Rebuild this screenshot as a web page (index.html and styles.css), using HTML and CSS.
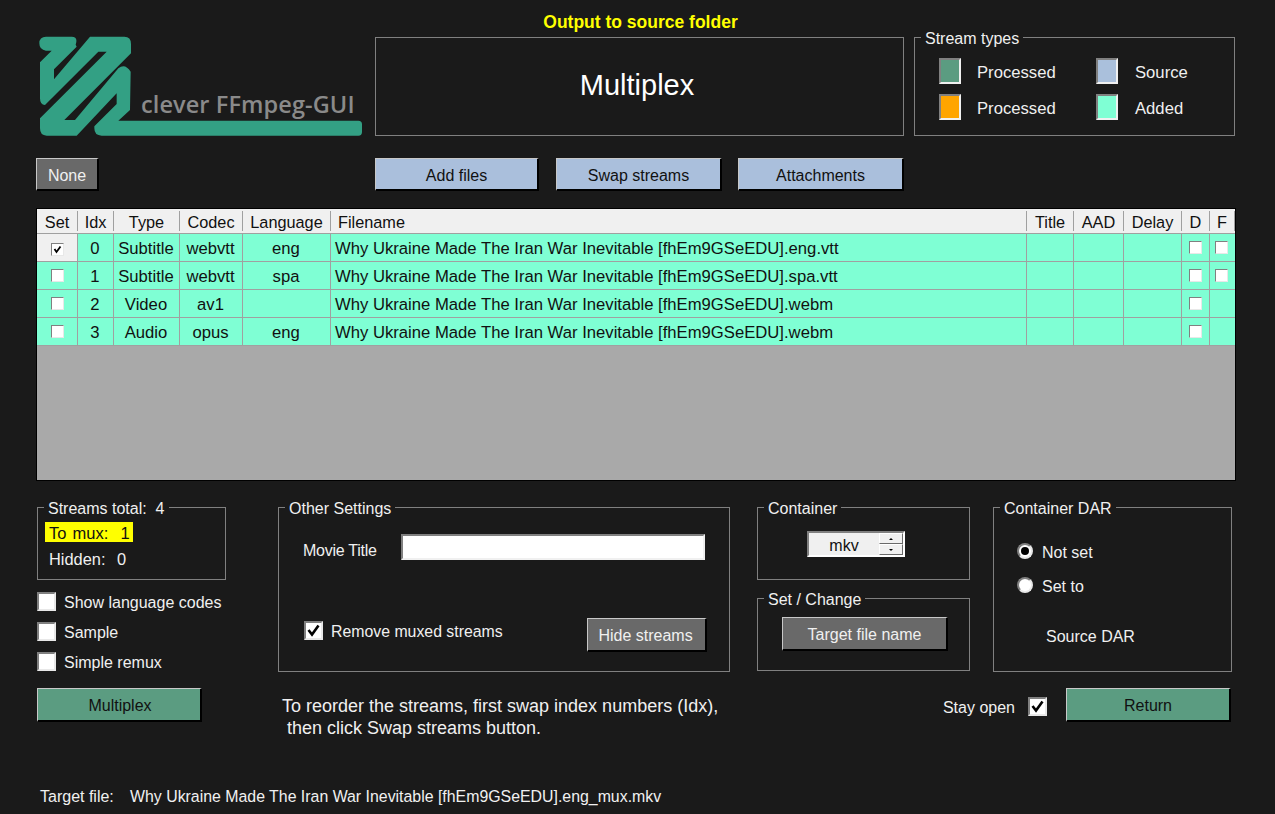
FILE: index.html
```html
<!DOCTYPE html>
<html lang="en">
<head>
<meta charset="utf-8">
<title>Multiplex</title>
<link rel="stylesheet" href="styles.css">
</head>
<body>
<div class="app">
  <header class="top">
    <div class="logo">
      <svg class="logo-mark" viewBox="0 0 990 330" width="330" height="110" aria-hidden="true">
        <path d="M33 20 L110 20 Q130 20 122 44 L125 50 L57 118 L57 148 L165 20 L268 20 Q288 20 288 42 L288 70 L88 270 L120 270 L250 115 Q270 98 287 125 L285 240 L250 272 L970 272 Q981 272 981 283 L981 306 Q981 317 970 317 L200 317 Q178 317 178 295 L178 289 L245 222 L245 190 L125 317 L35 317 Q15 317 15 295 L15 265 L215 65 L190 65 L30 225 Q15 225 15 205 L15 97 L50 62 L33 62 Q13 60 13 40 Q13 20 33 20 Z"/>
      </svg>
      <span class="logo-text">clever FFmpeg-GUI</span>
    </div>
    <div class="title-col">
      <div class="output-note">Output to source folder</div>
      <div class="title-panel">Multiplex</div>
    </div>
    <fieldset class="group types">
      <legend>Stream types</legend>
      <div class="types-grid">
        <div class="type"><span class="swatch sw-green"></span><span class="lbl">Processed</span></div>
        <div class="type"><span class="swatch sw-blue"></span><span class="lbl">Source</span></div>
        <div class="type"><span class="swatch sw-orange"></span><span class="lbl">Processed</span></div>
        <div class="type"><span class="swatch sw-aqua"></span><span class="lbl">Added</span></div>
      </div>
    </fieldset>
  </header>

  <div class="toolbar">
    <button class="btn btn-gray btn-none">None</button>
    <button class="btn btn-blue btn-add">Add files</button>
    <button class="btn btn-blue btn-swap">Swap streams</button>
    <button class="btn btn-blue btn-attach">Attachments</button>
  </div>

  <div class="grid-wrap">
    <table class="streams">
      <colgroup>
        <col class="c-set"><col class="c-idx"><col class="c-type"><col class="c-codec"><col class="c-lang"><col class="c-file"><col class="c-title"><col class="c-aad"><col class="c-delay"><col class="c-d"><col class="c-f">
      </colgroup>
      <thead>
        <tr><th>Set</th><th>Idx</th><th>Type</th><th>Codec</th><th>Language</th><th class="th-file">Filename</th><th>Title</th><th>AAD</th><th>Delay</th><th>D</th><th>F</th></tr>
      </thead>
      <tbody>
        <tr>
          <td class="current"><span class="chk-s"><svg viewBox="0 0 9 9" width="9" height="9"><path d="M1.5 4 L3.5 7 L7.5 1.5" /></svg></span></td><td>0</td><td>Subtitle</td><td>webvtt</td><td>eng</td><td class="file">Why Ukraine Made The Iran War Inevitable [fhEm9GSeEDU].eng.vtt</td><td></td><td></td><td></td><td><span class="chk-s"></span></td><td><span class="chk-s"></span></td>
        </tr>
        <tr>
          <td><span class="chk-s"></span></td><td>1</td><td>Subtitle</td><td>webvtt</td><td>spa</td><td class="file">Why Ukraine Made The Iran War Inevitable [fhEm9GSeEDU].spa.vtt</td><td></td><td></td><td></td><td><span class="chk-s"></span></td><td><span class="chk-s"></span></td>
        </tr>
        <tr>
          <td><span class="chk-s"></span></td><td>2</td><td>Video</td><td>av1</td><td></td><td class="file">Why Ukraine Made The Iran War Inevitable [fhEm9GSeEDU].webm</td><td></td><td></td><td></td><td><span class="chk-s"></span></td><td></td>
        </tr>
        <tr>
          <td><span class="chk-s"></span></td><td>3</td><td>Audio</td><td>opus</td><td>eng</td><td class="file">Why Ukraine Made The Iran War Inevitable [fhEm9GSeEDU].webm</td><td></td><td></td><td></td><td><span class="chk-s"></span></td><td></td>
        </tr>
      </tbody>
    </table>
  </div>

  <section class="bottom">
    <div class="left-col">
      <fieldset class="group totals">
        <legend class="pre">Streams total:  4</legend>
        <div class="to-mux pre">To mux:  1</div>
        <div class="hidden-count pre">Hidden:  0</div>
      </fieldset>
      <div class="checks">
        <label class="check-row"><span class="chk-l"></span><span class="lbl-s">Show language codes</span></label>
        <label class="check-row"><span class="chk-l"></span><span class="lbl-s">Sample</span></label>
        <label class="check-row"><span class="chk-l"></span><span class="lbl-s">Simple remux</span></label>
      </div>
      <button class="btn btn-green btn-mux">Multiplex</button>
    </div>

    <div class="right-col">
      <div class="panels">
        <fieldset class="group other">
          <legend>Other Settings</legend>
          <div class="title-row"><span class="movie-label">Movie Title</span><span class="field"></span></div>
          <div class="remove-row">
            <label class="check-row remove"><span class="chk-l"><svg viewBox="0 0 15 15" width="15" height="15"><path d="M2.5 7 L6 11.5 L12.5 2.5"/></svg></span><span class="lbl-s">Remove muxed streams</span></label>
            <button class="btn btn-gray btn-hide">Hide streams</button>
          </div>
        </fieldset>
        <div class="mid-col">
          <fieldset class="group container">
            <legend>Container</legend>
            <div class="spinner">
              <span class="spin-value">mkv</span>
              <span class="spin-btns"><span class="spin-up"></span><span class="spin-down"></span></span>
            </div>
          </fieldset>
          <fieldset class="group change">
            <legend>Set / Change</legend>
            <button class="btn btn-gray btn-target">Target file name</button>
          </fieldset>
        </div>
        <fieldset class="group dar">
          <legend>Container DAR</legend>
          <div class="radio-row first"><span class="radio on"></span><span class="lbl">Not set</span></div>
          <div class="radio-row"><span class="radio"></span><span class="lbl">Set to</span></div>
          <div class="source-dar">Source DAR</div>
        </fieldset>
      </div>
      <div class="actions">
        <p class="note">To reorder the streams, first swap index numbers (Idx),<br>&nbsp;then click Swap streams button.</p>
        <div class="finish">
          <span class="stay">Stay open</span>
          <span class="chk-l stay-box"><svg viewBox="0 0 15 15" width="15" height="15"><path d="M2.5 7 L6 11.5 L12.5 2.5"/></svg></span>
          <button class="btn btn-green btn-return">Return</button>
        </div>
      </div>
    </div>
  </section>

  <footer class="target"><span class="target-label">Target file:</span><span class="target-name">Why Ukraine Made The Iran War Inevitable [fhEm9GSeEDU].eng_mux.mkv</span></footer>
</div>
</body>
</html>
```
FILE: styles.css
```css
* { box-sizing: border-box; }
html, body { margin: 0; padding: 0; }
body {
  background: #1a1a1a;
  color: #f0f0f0;
  font: 16px/18px "Liberation Sans", Arial, sans-serif;
}
.app { width: 1275px; height: 814px; overflow: hidden; }
.pre { white-space: pre; }
.lbl { padding-top: 4px; }
.lbl-s { padding-top: 2px; }

/* top */
.top { display: flex; align-items: flex-start; height: 136px; padding: 14px 0 0 35px; }
.logo { position: relative; width: 340px; height: 106px; margin-top: 16px; flex: none; }
.logo-mark { display: block; fill: #33a084; }
.logo-text {
  position: absolute; left: 106px; top: 59px;
  font: 600 23.5px/30px "Open Sans", sans-serif;
  letter-spacing: 0.1px;
  color: #8a8a8a; white-space: nowrap;
}
.title-col { width: 529px; flex: none; }
.output-note { height: 23px; padding-left: 2px; text-align: center; color: #ffff00; font-weight: 700; font-size: 17.5px; line-height: 17px; }
.title-panel {
  height: 99px; padding: 0 5px 4px 0; border: 1px solid #808080;
  display: flex; align-items: center; justify-content: center;
  font-size: 29px; color: #fff;
}

.group {
  margin: 0; padding: 0; min-width: 0;
  border: 1px solid #808080;
}
.group legend { margin-left: 6px; padding: 3px 4px 0; line-height: 18px; }

.types { width: 321px; height: 109px; margin: 13px 0 0 10px; padding-top: 10px; }
.types-grid { display: grid; grid-template-columns: 157px 157px; row-gap: 10px; margin-left: 24px; font-size: 16.67px; }
.type { display: flex; align-items: center; gap: 16px; height: 26px; }
.type:nth-child(even) { gap: 17px; }
.swatch {
  width: 22px; height: 26px; flex: none;
  border: 2px solid; border-color: #808080 #f0f0f0 #f0f0f0 #808080;
}
.sw-green { background: #5b9c81; }
.sw-blue { background: #aac0dc; }
.sw-orange { background: #ffa500; }
.sw-aqua { background: #7fffd4; }

/* buttons */
.btn {
  display: block; margin: 0; padding: 2px 0 0;
  font: inherit; text-align: center;
  border-style: solid; border-width: 1px 2px 2px 1px;
  border-color: #c8c8c8 #000 #000 #c8c8c8;
}
.btn-gray { background: #696969; color: #f0f0f0; }
.btn-blue { background: #aabfdc; color: #111; }
.btn-green { background: #5b9c81; color: #111; }

.toolbar { display: flex; height: 33px; margin-top: 22px; padding-left: 36px; }
.toolbar .btn { padding-top: 4px; }
.btn-none { width: 63px; margin-right: 276px; }
.btn-add { width: 164px; margin-right: 17px; }
.btn-swap { width: 166px; margin-right: 16px; }
.btn-attach { width: 166px; }

/* table */
.grid-wrap {
  width: 1200px; height: 273px; margin: 17px 0 0 36px;
  background: #a9a9a9; border: 1px solid #000;
}
.streams { width: 1198px; table-layout: fixed; border-collapse: separate; border-spacing: 0; color: #111; }
.c-set { width: 41px; } .c-idx { width: 36px; } .c-type { width: 66px; } .c-codec { width: 63px; }
.c-lang { width: 88px; } .c-file { width: 696px; } .c-title { width: 47px; } .c-aad { width: 50px; }
.c-delay { width: 58px; } .c-d { width: 28px; } .c-f { width: 25px; }
.streams th {
  height: 25px; padding: 2px 1px 0 0; font-weight: 400; font-size: 16.3px; text-align: center;
  border-bottom: 1px solid #a0a0a0;
  background: linear-gradient(#a0a0a0, #a0a0a0) right center / 1px 20px no-repeat, #f0f0f0;
}
.streams th.th-file { text-align: left; padding-left: 7px; }
.streams td {
  height: 28px; padding: 2px 1px 0 0; text-align: center; vertical-align: middle;
  font-size: 16.67px;
  background: #7fffd4;
  border-right: 1px solid #a0a0a0; border-bottom: 1px solid #a0a0a0;
}
.streams td:first-child { padding-right: 0; }
.streams td:last-child { border-right: 0; padding-right: 2px; }
.streams td.file { text-align: left; padding-left: 4px; white-space: nowrap; }
.streams td.current { background: #f0f0f0; }
.chk-s {
  display: inline-flex; align-items: center; justify-content: center;
  width: 13px; height: 13px; vertical-align: 0;
  background: #fff; border: 1px solid; border-color: #808080 #e8e8e8 #e8e8e8 #808080;
}
.chk-s svg, .chk-l svg { fill: none; stroke: #000; display: block; }
.chk-s svg { stroke-width: 1.8; }
.chk-l svg { stroke-width: 2.6; }

/* bottom */
.bottom { display: flex; margin-top: 16px; padding-left: 37px; }
.left-col { width: 189px; flex: none; margin-right: 52px; }
.totals { height: 83px; padding-top: 4px; }
.to-mux { width: 88px; height: 20px; margin-left: 7px; line-height: 22px; padding-left: 4px; background: #ffff00; color: #111; font-size: 16.5px; word-spacing: 1.5px; }
.hidden-count { margin: 8px 0 0 7px; padding-left: 4px; line-height: 18px; font-size: 16.4px; word-spacing: 1.2px; }
.checks { display: flex; flex-direction: column; gap: 11px; margin-top: 12px; }
.check-row { display: flex; align-items: center; gap: 8px; height: 19px; }
.chk-l {
  display: flex; align-items: center; justify-content: center;
  width: 19px; height: 19px; flex: none;
  background: #fff; border: 2px solid; border-color: #808080 #e8e8e8 #e8e8e8 #808080;
}
.btn-mux { width: 165px; height: 34px; margin-top: 17px; padding-left: 2px; }

.right-col { width: 954px; flex: none; }
.panels { display: flex; height: 175px; }
.other { width: 452px; height: 175px; margin-right: 27px; padding-top: 16px; }
.title-row { display: flex; align-items: center; margin-left: 24px; }
.movie-label { width: 98px; flex: none; padding-top: 7px; white-space: nowrap; letter-spacing: -0.25px; }
.field {
  width: 304px; height: 26px; flex: none; background: #fff;
  border: 2px solid; border-color: #808080 #f0f0f0 #f0f0f0 #808080;
}
.remove-row { display: flex; align-items: flex-start; justify-content: space-between; margin: 58px 22px 0 25px; }
.remove { margin-top: 3px; font-size: 15.85px; }
.btn-hide { width: 120px; height: 34px; padding-right: 2px; }
.mid-col { width: 213px; margin-right: 23px; flex: none; }
.container { height: 83px; padding-top: 13px; }
.spinner {
  display: flex; width: 98px; height: 26px; margin-left: 49px; background: #f0f0f0; color: #111;
  border: 2px solid; border-color: #808080 #fff #fff #808080;
}
.spin-value { flex: 1; text-align: center; line-height: 26px; }
.spin-btns { display: flex; flex-direction: column; width: 24px; }
.spin-up, .spin-down {
  flex: 1; display: flex; align-items: center; justify-content: center;
  background: #f0f0f0; border: 1px solid; border-color: #fff #696969 #696969 #fff;
}
.spin-up::before, .spin-down::before {
  content: ""; width: 0; height: 0;
  border-left: 2px solid transparent; border-right: 2px solid transparent;
}
.spin-up::before { border-bottom: 2px solid #000; }
.spin-down::before { border-top: 2px solid #000; }
.change { height: 83px; margin-top: 8px; padding-top: 8px; }
.btn-target { width: 166px; height: 34px; margin-left: 24px; }
.dar { width: 239px; height: 175px; }
.radio-row { display: flex; align-items: center; gap: 9px; height: 18px; margin-left: 23px; }
.radio-row.first { margin-top: 24px; }
.radio-row + .radio-row { margin-top: 16px; }
.radio {
  width: 16px; height: 16px; border-radius: 50%; flex: none; background: #fff;
  border: 2px solid; border-color: #808080 #e8e8e8 #e8e8e8 #808080;
  display: flex; align-items: center; justify-content: center;
}
.radio.on::before { content: ""; width: 8px; height: 8px; border-radius: 50%; background: #000; }
.source-dar { margin: 34px 0 0 52px; }

.actions { display: flex; justify-content: space-between; margin-top: 16px; padding-right: 1px; }
.note { margin: 7px 0 0 4px; font-size: 18px; line-height: 22px; }
.finish { display: flex; align-items: flex-start; }
.stay { margin-top: 11px; margin-right: 13px; }
.stay-box { margin-top: 9px; margin-right: 19px; }
.btn-return { width: 165px; height: 34px; }

.target { display: flex; margin: 47px 0 0 40px; line-height: 22px; }
.target-label { width: 90px; }
.target-name { font-size: 15.88px; }
```
